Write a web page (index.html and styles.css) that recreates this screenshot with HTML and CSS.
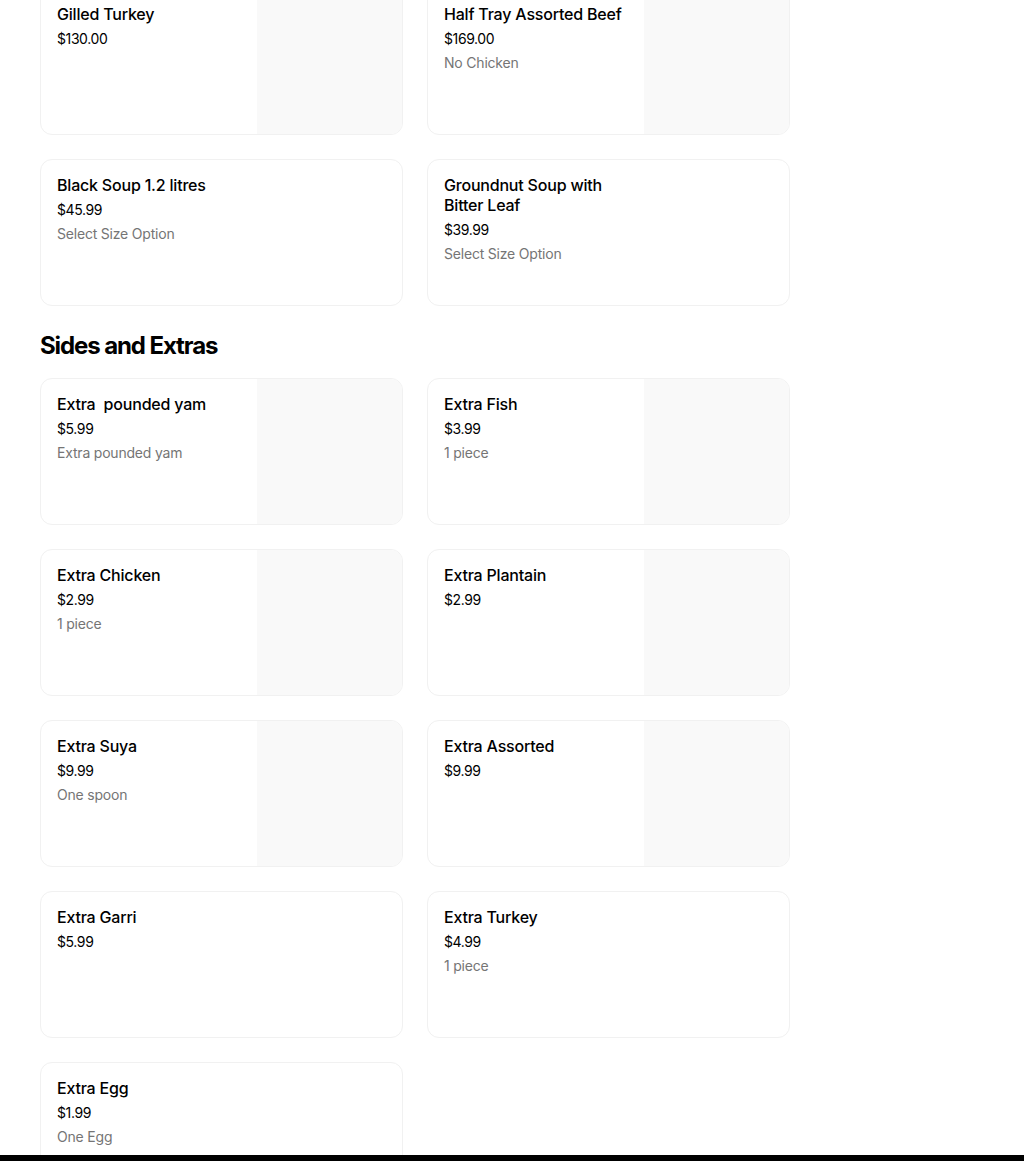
FILE: index.html
```html
<!DOCTYPE html>
<html>
<head>
<meta charset="utf-8">
<link rel="stylesheet" href="styles.css">
</head>
<body>
<main class="menu">
  <ul class="grid grid-top">
    <li class="card"><div class="info"><h3 class="name">Gilled Turkey</h3><p class="price">$130.00</p></div><div class="thumb"></div></li>
    <li class="card"><div class="info"><h3 class="name">Half Tray Assorted Beef</h3><p class="price">$169.00</p><p class="desc">No Chicken</p></div><div class="thumb"></div></li>
    <li class="card"><div class="info"><h3 class="name">Black Soup 1.2 litres</h3><p class="price">$45.99</p><p class="desc">Select Size Option</p></div></li>
    <li class="card"><div class="info"><h3 class="name">Groundnut Soup with Bitter Leaf</h3><p class="price">$39.99</p><p class="desc">Select Size Option</p></div></li>
  </ul>
  <h2 class="section-title">Sides and Extras</h2>
  <ul class="grid">
    <li class="card"><div class="info"><h3 class="name">Extra&nbsp; pounded yam</h3><p class="price">$5.99</p><p class="desc">Extra pounded yam</p></div><div class="thumb"></div></li>
    <li class="card"><div class="info"><h3 class="name">Extra Fish</h3><p class="price">$3.99</p><p class="desc">1 piece</p></div><div class="thumb"></div></li>
    <li class="card"><div class="info"><h3 class="name">Extra Chicken</h3><p class="price">$2.99</p><p class="desc">1 piece</p></div><div class="thumb"></div></li>
    <li class="card"><div class="info"><h3 class="name">Extra Plantain</h3><p class="price">$2.99</p></div><div class="thumb"></div></li>
    <li class="card"><div class="info"><h3 class="name">Extra Suya</h3><p class="price">$9.99</p><p class="desc">One spoon</p></div><div class="thumb"></div></li>
    <li class="card"><div class="info"><h3 class="name">Extra Assorted</h3><p class="price">$9.99</p></div><div class="thumb"></div></li>
    <li class="card"><div class="info"><h3 class="name">Extra Garri</h3><p class="price">$5.99</p></div></li>
    <li class="card"><div class="info"><h3 class="name">Extra Turkey</h3><p class="price">$4.99</p><p class="desc">1 piece</p></div></li>
    <li class="card"><div class="info"><h3 class="name">Extra Egg</h3><p class="price">$1.99</p><p class="desc">One Egg</p></div></li>
  </ul>
</main>
<div class="bottom-bar"></div>
</body>
</html>
```

FILE: styles.css
```css
html, body {
  margin: 0;
  padding: 0;
  background: #fff;
  font-family: Inter, "Noto Sans", "Liberation Sans", sans-serif;
  color: #000;
}
.menu {
  width: 750px;
  margin-left: 40px;
}
.grid {
  list-style: none;
  margin: 0;
  padding: 0;
  display: grid;
  grid-template-columns: 363px 363px;
  column-gap: 24px;
  row-gap: 24px;
}
.grid-top {
  margin-top: -12px;
}
.card {
  box-sizing: border-box;
  height: 147px;
  border: 1px solid #f1f1f1;
  border-radius: 12px;
  display: flex;
  justify-content: space-between;
  overflow: hidden;
  background: #fff;
}
.info {
  width: 184px;
  padding: 15px 0 0 16px;
}
.name {
  margin: 0;
  font-size: 16px;
  line-height: 20px;
  font-weight: 500;
  letter-spacing: -0.2px;
  color: #000;
}
.price {
  margin: 5px 0 0;
  font-size: 14px;
  line-height: 20px;
  color: #000;
  letter-spacing: -0.4px;
}
.desc {
  margin: 4px 0 0;
  font-size: 14px;
  line-height: 20px;
  color: #757575;
  letter-spacing: -0.2px;
}
.thumb {
  width: 145px;
  height: 100%;
  background: #f9f9f9;
}
.section-title {
  margin: 24px 0 16px;
  font-size: 24px;
  line-height: 32px;
  font-weight: 700;
  letter-spacing: -1.1px;
}
.bottom-bar {
  position: fixed;
  left: 0;
  right: 0;
  bottom: 0;
  height: 6px;
  background: #000;
}
```
